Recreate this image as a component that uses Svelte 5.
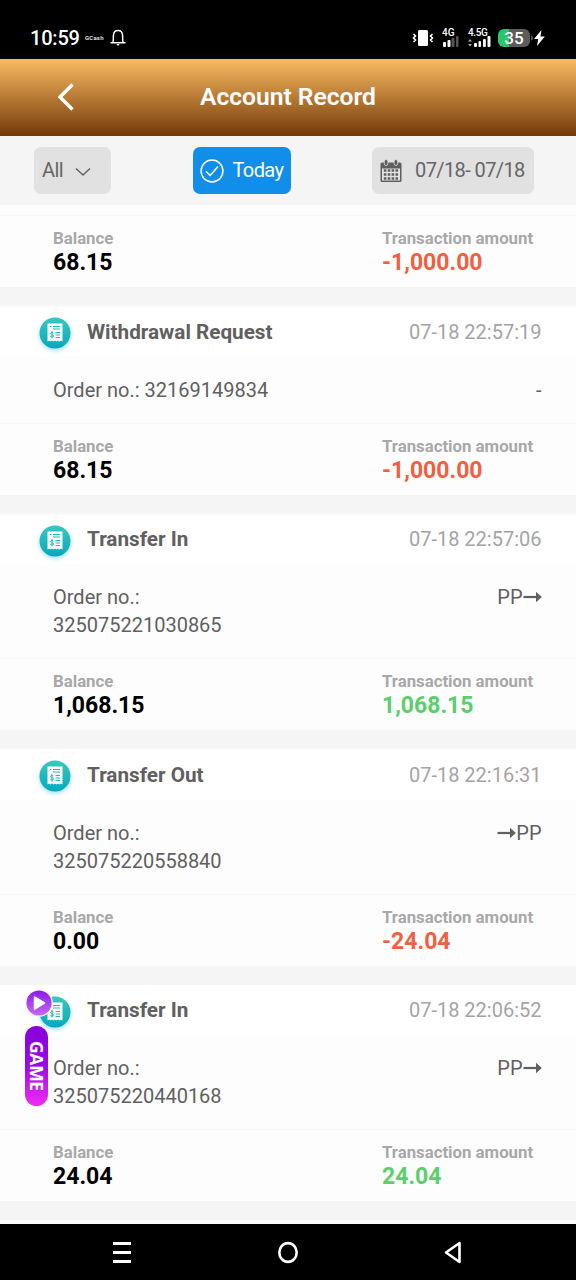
<script lang="ts">
	interface Entry {
		title: string;
		time: string;
		order: string;
		route: 'none' | 'in' | 'out';
		balance: string;
		amount: string;
	}

	const entries: Entry[] = [
		{ title: 'Withdrawal Request', time: '07-18 22:57:19', order: '32169149834', route: 'none', balance: '68.15', amount: '-1,000.00' },
		{ title: 'Transfer In', time: '07-18 22:57:06', order: '325075221030865', route: 'in', balance: '1,068.15', amount: '1,068.15' },
		{ title: 'Transfer Out', time: '07-18 22:16:31', order: '325075220558840', route: 'out', balance: '0.00', amount: '-24.04' },
		{ title: 'Transfer In', time: '07-18 22:06:52', order: '325075220440168', route: 'in', balance: '24.04', amount: '24.04' }
	];
</script>

{#snippet arrow()}
	<svg class="arrow" width="19" height="12" viewBox="0 0 19 12">
		<path d="M0.500 6h14" stroke="currentColor" stroke-width="2.200" />
		<path d="M13 0.800l5.800 5.200-5.800 5.200z" fill="currentColor" />
	</svg>
{/snippet}

{#snippet totals(balance: string, amount: string)}
	<div class="totals">
		<div class="total">
			<span class="label">Balance</span>
			<span class="value">{balance}</span>
		</div>
		<div class="total">
			<span class="label">Transaction amount</span>
			<span class="value" class:negative={amount.startsWith('-')} class:positive={!amount.startsWith('-')}>{amount}</span>
		</div>
	</div>
{/snippet}

<div class="screen">
	<div class="status">
		<span class="clock">10:59</span>
		<span class="gcash">GCash</span>
		<svg class="bell" width="16" height="18" viewBox="0 0 16 18" fill="none" stroke="#fff" stroke-width="1.500">
			<path d="M0.500 13.800h15M2.800 13.500C3.600 12 3.300 9.500 3.400 6.500C3.500 3.500 5.300 1.500 8 1.500s4.500 2 4.600 5c.1 3-.2 5.500.6 7" />
			<path d="M6.300 15h3.400L8 17z" fill="#fff" stroke="none" />
		</svg>
		<div class="signals">
			<svg class="vibrate" width="22" height="18" viewBox="0 0 22 18">
				<rect x="6" y="1" width="10" height="16" rx="1.500" fill="#fff" />
				<path d="M1.500 5l2 2-2 2 2 2-2 2M20.500 5l-2 2 2 2-2 2 2 2" fill="none" stroke="#fff" stroke-width="1.600" />
			</svg>
			<div class="network">
				<span>4G</span>
				<svg width="17" height="11" viewBox="0 0 17 11" fill="#fff">
					<rect x="1" y="6" width="3" height="5" rx="1" />
					<rect x="5.500" y="4" width="3" height="7" rx="1" />
					<g fill="#555">
						<rect x="9.500" y="2" width="3" height="9" rx="1" />
						<rect x="14" y="0" width="2.500" height="11" rx="1" />
					</g>
				</svg>
			</div>
			<div class="network wide">
				<span>4.5G</span>
				<svg width="23" height="11" viewBox="0 0 23 11" fill="#fff">
					<path d="M0 5.500L2 3l2 2.500zM0 8l2 2.500L4 8z" fill="#aaa" />
					<rect x="6" y="7" width="3" height="4" rx="1" />
					<rect x="10.500" y="5" width="2.500" height="6" rx="1" />
					<rect x="15" y="3" width="2.800" height="8" rx="1" />
					<rect x="19.500" y="0" width="3" height="11" rx="1" />
				</svg>
			</div>
			<div class="battery">35</div>
			<svg class="bolt" width="14" height="16" viewBox="0 0 14 16">
				<path d="M0 5.500c2.500 0 2.500 5 0 5z" fill="#5b5b5b" />
				<path d="M10.500 0L3 9h4.200L6 16l7.800-9.500H9.500z" fill="#fff" />
			</svg>
		</div>
	</div>

	<header>
		<svg class="back" width="18" height="28" viewBox="0 0 18 28">
			<path d="M15.500 1.500L3 14l12.500 12.500" fill="none" stroke="#fff" stroke-width="3.400" />
		</svg>
		<h1>Account Record</h1>
	</header>

	<div class="filters">
		<button class="filter type">
			<span>All</span>
			<svg class="chevron" width="16" height="10" viewBox="0 0 16 10">
				<path d="M1 1.500l7 6.500 7-6.500" fill="none" stroke="#666" stroke-width="1.600" />
			</svg>
		</button>
		<button class="filter today">
			<svg width="24" height="24" viewBox="0 0 24 24" fill="none" stroke="#fff" stroke-width="1.500">
				<circle cx="12" cy="12" r="10.900" />
				<path d="M6 12.500l4.200 4L18 7.500" />
			</svg>
			<span>Today</span>
		</button>
		<button class="filter dates">
			<svg width="22" height="24" viewBox="0 0 22 24">
				<rect x="0.500" y="3.500" width="21" height="19.500" rx="1.500" fill="#5f5f5f" />
				<rect x="2" y="9.500" width="18" height="12" fill="#e4e4e4" />
				<path d="M3.800 11.500h14.500M3.800 15.500h14.500M3.800 19.500h14.500" stroke="#5f5f5f" stroke-width="2.400" stroke-dasharray="2.600 1.300" />
				<g fill="#5f5f5f" stroke="#e1e1e1" stroke-width=".8">
					<rect x="4.300" y=".5" width="3.600" height="6" rx="1.800" />
					<rect x="14.100" y=".5" width="3.600" height="6" rx="1.800" />
				</g>
			</svg>
			<span>07/18- 07/18</span>
		</button>
	</div>

	<main>
		<section class="card partial">
			{@render totals('68.15', '-1,000.00')}
		</section>

		{#each entries as entry}
			<section class="card">
				<div class="head">
					<svg class="receipt" width="40" height="40" viewBox="0 0 40 40">
						<defs>
							<linearGradient id="teal" x1="0" y1="0" x2="0" y2="1">
								<stop offset="0" stop-color="#3bc8bd" />
								<stop offset="1" stop-color="#05a9bd" />
							</linearGradient>
						</defs>
						<circle cx="20" cy="20" r="15.500" fill="url(#teal)" />
						<path d="M12.500 10.500h15v18l-1.500-1-1.500 1-1.500-1-1.500 1-1.500-1-1.500 1-1.500-1-1.500 1-1.500-1-1.500 1z" fill="#fff" />
						<path d="M15 13.500h1.500M18 13.500h7M18 16h7M20.500 19.500H25M20.500 22H25M20.500 24.500H25" stroke="#20b8bd" stroke-width="1.200" />
						<path d="M18.500 20c-.5-.8-3-.8-3 .6 0 1.500 3 .8 3 2.400 0 1.300-2.500 1.400-3.200.4M17 18v7.500" fill="none" stroke="#20b8bd" stroke-width="1" />
					</svg>
					<h2>{entry.title}</h2>
					<time>{entry.time}</time>
				</div>
				<div class="detail">
					<p>Order no.: {entry.order}</p>
					<span class="route">
						{#if entry.route === 'in'}
							PP{@render arrow()}
						{:else if entry.route === 'out'}
							{@render arrow()}PP
						{:else}
							-
						{/if}
					</span>
				</div>
				{@render totals(entry.balance, entry.amount)}
			</section>
		{/each}
		<section class="card next"></section>
	</main>

	<nav>
		<svg width="20" height="24" viewBox="0 0 20 24">
			<path d="M1 3.500h18M1 12.500h18M1 21.500h18" stroke="#fff" stroke-width="3" />
		</svg>
		<svg width="22" height="24" viewBox="0 0 22 24">
			<ellipse cx="11" cy="12.500" rx="8.700" ry="9.400" fill="none" stroke="#fff" stroke-width="2.600" />
		</svg>
		<svg width="20" height="24" viewBox="0 0 20 24">
			<path d="M16.500 3v19L3 12.500z" fill="none" stroke="#fff" stroke-width="2.600" stroke-linejoin="round" />
		</svg>
	</nav>

	<div class="game">
		<svg width="28" height="28" viewBox="0 0 28 28">
			<defs>
				<linearGradient id="play" x1="0" y1="0" x2="0" y2="1">
					<stop offset="0" stop-color="#8a17ee" />
					<stop offset="1" stop-color="#c96bf0" />
				</linearGradient>
			</defs>
			<circle cx="14" cy="14" r="13.200" fill="url(#play)" stroke="#fff" stroke-width="1.200" />
			<path d="M9.500 8v12l10-6z" fill="#fff" stroke="#fff" stroke-width="1.500" stroke-linejoin="round" />
		</svg>
		<span>GAME</span>
	</div>
</div>

<style>
	:global(body) {
		background: #fff;
	}

	.screen {
		position: relative;
		display: flex;
		flex-direction: column;
		width: 576px;
		height: 1280px;
		overflow: hidden;
		font-family: Roboto, sans-serif;
		font-size: 20px;
		color: #606060;
	}

	svg {
		flex: none;
	}

	.status {
		display: flex;
		flex: none;
		align-items: center;
		box-sizing: border-box;
		height: 59px;
		padding: 16px 31px 0 30px;
		background: #000;
		color: #fff;
	}

	.clock {
		width: 55px;
		font-weight: 500;
		letter-spacing: -0.2px;
	}

	.gcash {
		width: 25px;
		font-size: 6px;
		font-weight: 500;
		letter-spacing: 0.2px;
	}

	.signals {
		display: flex;
		align-items: center;
		margin-left: auto;
	}

	.vibrate {
		margin-right: 8px;
	}

	.network {
		display: flex;
		flex-direction: column;
		width: 26px;
		font-size: 10px;
		font-weight: 500;
		line-height: 7px;
	}

	.network.wide {
		width: 30px;
		letter-spacing: -0.4px;
	}

	.battery {
		width: 32px;
		height: 18px;
		border-radius: 6px;
		background: linear-gradient(90deg, #2bc66b 35%, #5b5b5b 35%);
		font-size: 17px;
		font-weight: 500;
		line-height: 19px;
		text-align: center;
	}

	.bolt {
		margin-left: 1px;
	}

	header {
		display: grid;
		grid-template-columns: 75px 1fr 75px;
		flex: none;
		align-items: center;
		box-sizing: border-box;
		height: 77px;
		padding-bottom: 2px;
		background: linear-gradient(#fbbb61, #733a09);
	}

	.back {
		justify-self: end;
	}

	h1 {
		margin: 0;
		color: #fff;
		font-size: 24.6px;
		font-weight: 600;
		text-align: center;
	}

	.filters {
		display: flex;
		flex: none;
		align-items: center;
		justify-content: space-between;
		box-sizing: border-box;
		height: 69px;
		padding: 0 42px 0 34px;
		background: #f5f5f5;
	}

	.filter {
		display: flex;
		align-items: center;
		box-sizing: border-box;
		height: 47px;
		padding: 0 8px;
		border: none;
		border-radius: 7px;
		background: #e1e1e1;
		color: #666;
		font: inherit;
		letter-spacing: -0.6px;
		white-space: nowrap;
	}

	.filter span {
		padding-bottom: 2px;
	}

	.type {
		width: 77px;
		gap: 12px;
	}

	.chevron {
		margin-top: 2px;
	}

	.today {
		width: 98px;
		padding: 0 7px;
		gap: 9px;
		background: #118eea;
		color: #fff;
	}

	.dates {
		width: 162px;
		gap: 13px;
	}

	main {
		flex: 1;
		min-height: 0;
		overflow: hidden;
		background: #f5f5f5;
	}

	.card {
		margin-bottom: 19px;
		background: #fdfdfd;
	}

	.partial {
		padding-top: 10px;
	}

	.head {
		display: flex;
		align-items: center;
		height: 51px;
		padding: 0 34.5px 0 35px;
		background: #fff;
	}

	.receipt {
		margin-top: 3px;
		filter: drop-shadow(0 2px 2px #a5dff2);
	}

	h2 {
		margin: 0 auto 0 12px;
		font-size: 20.7px;
		font-weight: 700;
	}

	time {
		color: #a4a4a4;
	}

	.detail {
		display: flex;
		justify-content: space-between;
		padding: 18.5px 34.5px 19px 53px;
		line-height: 28px;
	}

	p {
		width: 218px;
		margin: 0;
	}

	.route {
		display: flex;
		align-items: center;
		height: 28px;
	}

	.totals {
		display: grid;
		grid-template-columns: 329px 1fr;
		box-sizing: border-box;
		height: 72px;
		padding: 11px 0 0 53px;
		border-top: 1px solid #f7f7f7;
	}

	.total {
		display: flex;
		flex-direction: column;
	}

	.label {
		color: #a8a8a8;
		font-size: 16.8px;
		font-weight: 700;
		line-height: 23px;
	}

	.value {
		color: #000;
		font-size: 23px;
		font-weight: 700;
		line-height: 25px;
	}

	.negative {
		color: #f05f40;
	}

	.positive {
		color: #5bcf6b;
	}

	.next {
		height: 20px;
	}

	nav {
		display: flex;
		flex: none;
		align-items: center;
		justify-content: space-between;
		box-sizing: border-box;
		height: 56px;
		padding: 0 113px 0 112px;
		background: #000;
	}

	.game {
		position: absolute;
		top: 989px;
		left: 25px;
		display: flex;
		flex-direction: column;
		gap: 9px;
	}

	.game span {
		width: 23px;
		height: 80px;
		border-radius: 12px;
		background: linear-gradient(#8700d8, #9c0be4 50%, #f22cf7);
		color: #fff;
		font-family: 'Open Sans', sans-serif;
		font-size: 17.5px;
		font-weight: 700;
		letter-spacing: -0.3px;
		line-height: 23px;
		text-align: center;
		writing-mode: vertical-rl;
	}
</style>
